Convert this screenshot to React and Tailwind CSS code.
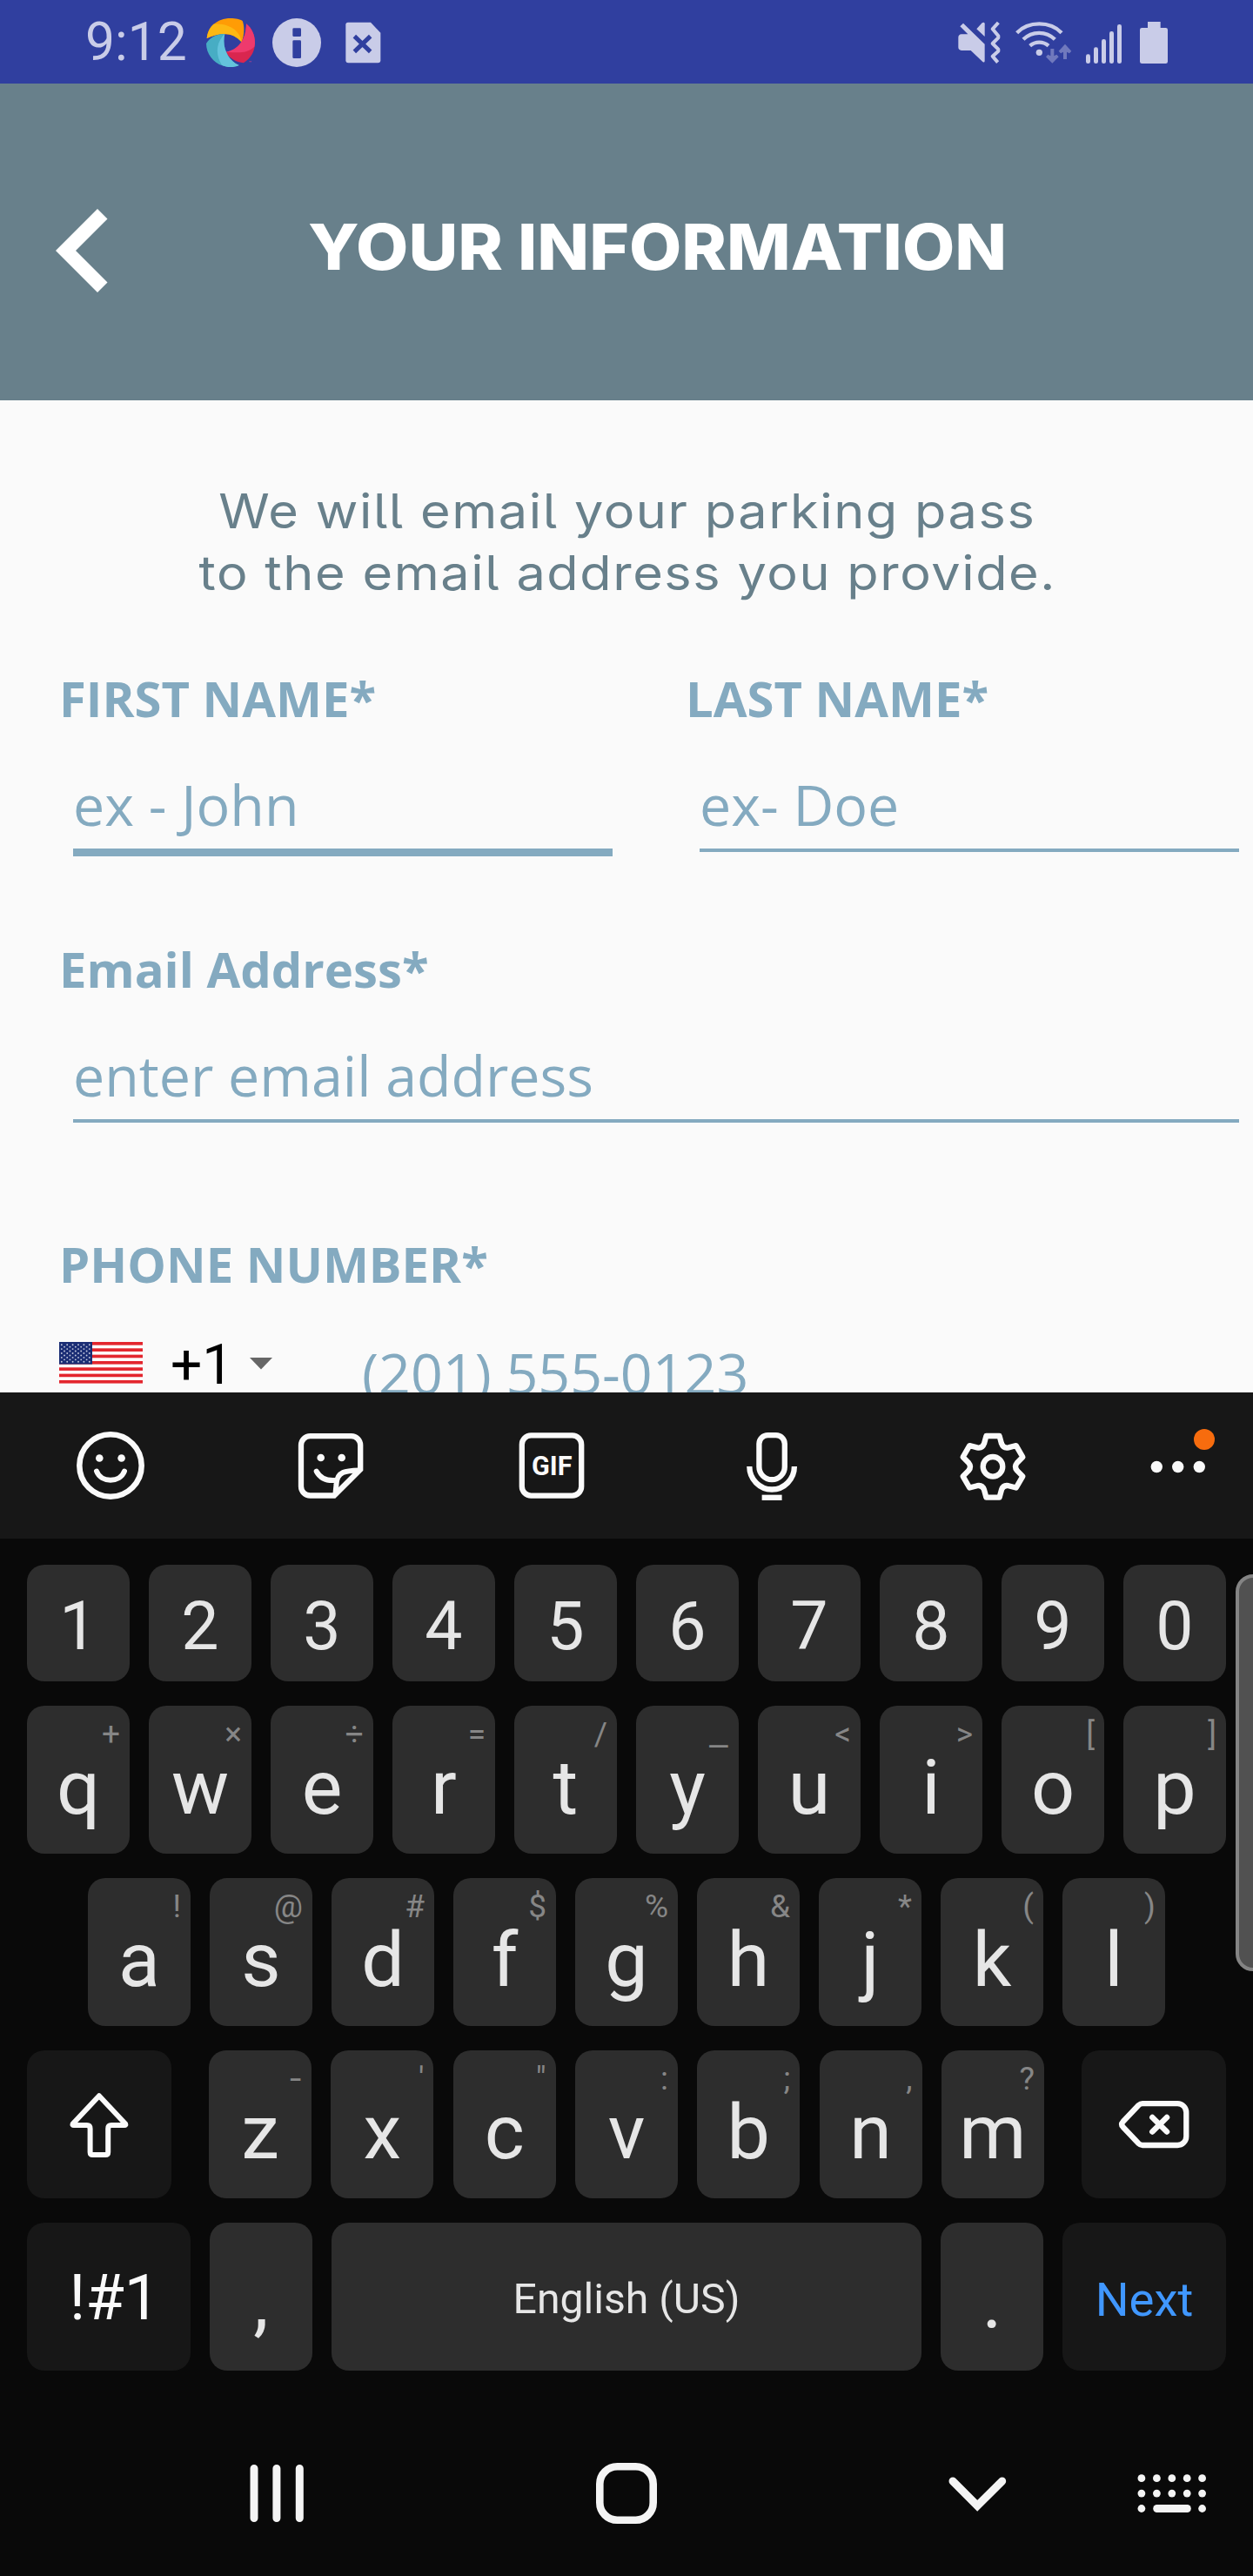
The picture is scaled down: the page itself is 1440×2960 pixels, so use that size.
import React from "react";

const GEAR_PATH = (() => {
  const cx = 1141;
  const cy = 1685.3;
  const rot = (x, y, deg) => {
    const a = (deg * Math.PI) / 180;
    const px = cx + x * Math.cos(a) - y * Math.sin(a);
    const py = cy + x * Math.sin(a) + y * Math.cos(a);
    return `${px.toFixed(2)} ${py.toFixed(2)}`;
  };
  let d = "";
  for (let i = 0; i < 6; i++) {
    const r = i * 60;
    d += `${i === 0 ? "M" : "L"}${rot(-10, -26.5, r)} L${rot(-7.6, -35.3, r)} L${rot(7.6, -35.3, r)} L${rot(10, -26.5, r)} Q${rot(12, -20.8, r)} ${rot(-10, -26.5, r + 60)} `;
  }
  return d + "Z";
})();

function StatusBar() {
  return (
    <div className="flex h-[96px] items-center justify-between bg-[#303f9f] pr-[96px] pl-[98px] text-[#c9cce8]">
      <div className="flex items-center">
        <span className="w-[137px] pt-[2px] text-[60.5px] leading-[94px] whitespace-nowrap">9:12</span>
        <svg width="60" height="96" viewBox="525 0 180 288">
          <path d="M533 132C535 92 570 63 615 63C632 63 648 66 656 72C664 92 662 125 653 145C625 113 585 108 533 132Z" fill="#ff9c05" />
          <path d="M533 132C536 110 544 94 556 83C600 78 648 100 653 145C625 113 585 108 533 132Z" fill="#fdb813" />
          <path d="M669 82C690 98 699 124 699 147C699 176 686 200 660 217C634 214 612 202 598 180C640 172 668 140 669 82Z" fill="#d9264f" />
          <path d="M669 82C690 98 699 124 699 147C699 151 698 157 697 161C664 190 632 178 598 180C640 172 668 140 669 82Z" fill="#ee3a6d" />
          <path d="M531 150C546 127 570 117 595 117C584 160 604 208 644 225C634 230 625 231 615 231C568 231 531 194 531 150Z" fill="#47adc4" />
          <path d="M595 117C584 160 604 208 644 225C634 230 625 231 615 231C604 231 594 228 585 224C562 190 564 146 595 117Z" fill="#64c3dc" />
          <text x="677" y="222" fontSize="17" fill="#b8407f">™</text>
        </svg>
        <svg className="ml-[15px]" width="63" height="96" viewBox="750 0 189 288">
          <circle cx="843" cy="147" r="84" fill="currentColor" />
          <rect x="829" y="97" width="29" height="29" rx="4" fill="#303f9f" />
          <rect x="829" y="139" width="29" height="62" rx="4" fill="#303f9f" />
        </svg>
        <svg className="ml-[20px]" width="50" height="96" viewBox="998 0 150 288">
          <path d="M1019 77H1097L1131 113V208Q1131 217 1122 217H1020Q1011 217 1011 208V85Q1011 77 1019 77Z" fill="currentColor" />
          <path d="M1041 125L1096 178M1096 125L1041 178" stroke="#303f9f" strokeWidth="15" />
        </svg>
      </div>
      <div className="flex items-center">
        <svg width="50" height="96" viewBox="120 0 150 288">
          <path d="M141 80L215 152V211Q214 217 208 213L167 174H135Q124 173 124 163V130Q124 119 135 118H157L130 91Z" fill="currentColor" />
          <path d="M187 100L206 79Q214 75 215 82V126Z" fill="currentColor" />
          <path d="M262 78L242 100L262 124L262 130L242 150L262 170V176L242 194L260 215" fill="none" stroke="currentColor" strokeWidth="12" strokeLinejoin="round" />
        </svg>
        <svg className="ml-[15px]" width="68" height="96" viewBox="315 0 204 288">
          <g fill="none" stroke="currentColor" strokeWidth="13">
            <path d="M326 113C366 72 440 72 480 113" />
            <path d="M348 136C378 106 427 106 457 136" />
            <path d="M371 158C389 142 417 142 435 158" />
          </g>
          <circle cx="403" cy="181" r="11" fill="currentColor" />
          <path d="M442 168H454V193L463 188L470 196L448 218L426 196L433 188L442 193ZM486 204H498V179L507 184L514 176L492 152L470 176L477 184L486 179Z" fill="#7079bd" />
        </svg>
        <svg className="ml-[12px]" width="45" height="96" viewBox="555 0 135 288">
          <g fill="currentColor">
            <rect x="564" y="187" width="15" height="32" rx="7" />
            <rect x="591" y="163" width="15" height="56" rx="7" />
            <rect x="618" y="135" width="15" height="84" rx="7" />
            <rect x="645" y="108" width="15" height="111" rx="7" />
            <rect x="672" y="84" width="15" height="135" rx="7" />
          </g>
        </svg>
        <svg className="ml-[18px]" width="36" height="96" viewBox="744 0 108 288">
          <path d="M777 75H821V96H839Q846 96 846 103V212Q846 219 839 219H757Q750 219 750 212V103Q750 96 757 96H777Z" fill="currentColor" />
        </svg>
      </div>
    </div>
  );
}

function Header() {
  return (
    <header className="flex h-[364px] items-start bg-[#68808b] text-white">
      <svg className="mt-[136px] ml-[58px] shrink-0" width="70" height="112" viewBox="58 232 70 112">
        <path d="M64 288L112 240L123.500 251.500L87 288L123.500 324.500L112 336Z" fill="currentColor" />
      </svg>
      <h1 className="mt-[148px] ml-[226px] origin-left scale-x-[1.07] font-['Inter'] text-[73px] leading-[80px] font-extrabold whitespace-nowrap">
        YOUR INFORMATION
      </h1>
    </header>
  );
}

function Field({ label, placeholder, focused }) {
  return (
    <div className="flex-1">
      <div className="pl-[68px] text-[56.2px] leading-[56px] font-bold">{label}</div>
      <div className="mt-[64px] mr-[16px] ml-[84px] h-[81px] text-[64.5px] leading-[60px] whitespace-nowrap">
        {placeholder}
      </div>
      <div className={focused ? "mr-[16px] ml-[84px] h-[9px] bg-[#84aac0]" : "mr-[16px] ml-[84px] h-[4px] bg-[#84aac0]"} />
    </div>
  );
}

function Flag() {
  const stars = [];
  for (let r = 0; r < 9; r++) {
    const n = r % 2 === 0 ? 6 : 5;
    for (let c = 0; c < n; c++) {
      stars.push(<circle key={`${r}-${c}`} cx={2.8 + c * 6.4 + (r % 2) * 3.2} cy={3.2 + r * 2.45} r="0.95" fill="#c3c9de" />);
    }
  }
  return (
    <svg className="mt-[14px] ml-[68px] shrink-0" width="96" height="48" viewBox="0 0 96 48">
      <rect width="96" height="47.6" fill="#fff" />
      {[0, 1, 2, 3, 4, 5, 6].map((i) => (
        <rect key={i} y={i * 7.32} width="96" height="3.66" fill="#e3262e" />
      ))}
      <rect width="38" height="25.600" fill="#1a2d74" />
      {stars}
    </svg>
  );
}

function Form() {
  return (
    <main className="h-[1140px] overflow-hidden bg-[#fafafa] pt-[92px] font-['Open_Sans'] text-[#84aac0]">
      <p className="flex h-[142px] flex-col items-center pl-[2px] font-['Inter'] text-[55px] leading-[71px] tracking-[1.45px] text-[#68808b] [font-feature-settings:'cv05']">
        <span className="scale-x-[1.08] whitespace-nowrap">We will email your parking pass</span>
        <span className="scale-x-[1.08] whitespace-nowrap">to the email address you provide.</span>
      </p>
      <div className="mt-[80px] flex h-[311px]">
        <Field label="FIRST NAME*" placeholder="ex - John" focused />
        <Field label="LAST NAME*" placeholder="ex- Doe" />
      </div>
      <div className="flex h-[339px]">
        <Field label="Email Address*" placeholder="enter email address" />
      </div>
      <div className="pl-[68px] text-[56.2px] leading-[56px] font-bold">PHONE NUMBER*</div>
      <div className="mt-[48px] flex items-start">
        <Flag />
        <span className="mt-[11px] ml-[32px] w-[91px] font-['Roboto'] text-[64px] leading-[60px] text-black">+1</span>
        <svg className="mt-[32px] shrink-0" width="26" height="14" viewBox="0 0 26 14">
          <path d="M0 0H26L13 13.500Z" fill="#666" />
        </svg>
        <span className="mt-[19px] ml-[103px] text-[64.5px] leading-[60px] whitespace-nowrap">(201) 555-0123</span>
      </div>
    </main>
  );
}

function Toolbar() {
  return (
    <div className="flex h-[168px] bg-[#171717] pl-[87px] text-[#fafafa]">
      <svg width="80" height="168" viewBox="87 1600 80 168" fill="none" stroke="currentColor" strokeWidth="6.500">
        <circle cx="127" cy="1684" r="35.700" />
        <circle cx="114.300" cy="1675.500" r="4.300" fill="currentColor" stroke="none" />
        <circle cx="139.600" cy="1675.500" r="4.300" fill="currentColor" stroke="none" />
        <path d="M111 1690.500C116 1704 138 1704 143 1690.500" strokeWidth="6" strokeLinecap="round" />
      </svg>
      <svg className="ml-[173px]" width="80" height="168" viewBox="340 1600 80 168" fill="none" stroke="currentColor" strokeWidth="6.300">
        <path d="M384 1718.500H356.500A10.500 10.500 0 0 1 346 1708V1660.600A10.500 10.500 0 0 1 356.500 1650.100H403.700A10.500 10.500 0 0 1 414.200 1660.600V1688.500Z" />
        <path d="M414 1689.500C398 1690 387 1690 386.500 1706L385.300 1718" strokeWidth="6" />
        <circle cx="368.700" cy="1675" r="4.300" fill="currentColor" stroke="none" />
        <circle cx="392.700" cy="1675" r="4.300" fill="currentColor" stroke="none" />
        <path d="M363.700 1690.700C368 1698.500 375 1701.500 384 1701" strokeWidth="6" strokeLinecap="round" />
      </svg>
      <svg className="ml-[174px]" width="80" height="168" viewBox="594 1600 80 168">
        <rect x="599.800" y="1649.400" width="68.400" height="69.200" rx="10.500" fill="none" stroke="currentColor" strokeWidth="6.300" />
        <text x="634.200" y="1695" textAnchor="middle" fontSize="30.500" fontWeight="700" fill="currentColor">GIF</text>
      </svg>
      <svg className="ml-[173px]" width="80" height="168" viewBox="847 1600 80 168" fill="none" stroke="currentColor" strokeWidth="6.300">
        <path d="M872.400 1659A10 10 0 0 1 882.400 1649.200H891.800A10 10 0 0 1 901.800 1659V1685.500A14.700 14.700 0 0 1 872.400 1685.500Z" />
        <path d="M861.300 1685A25.800 26.500 0 0 0 912.900 1685" />
        <path d="M875.600 1720.800H898.600" />
      </svg>
      <svg className="ml-[174px]" width="80" height="168" viewBox="1101 1600 80 168" fill="none" stroke="currentColor" strokeWidth="6.300" strokeLinejoin="round">
        <path d={GEAR_PATH} />
        <circle cx="1141" cy="1685.300" r="11.300" />
      </svg>
      <svg className="ml-[137px]" width="82" height="168" viewBox="1318 1600 82 168">
        <circle cx="1329.300" cy="1685.500" r="6.700" fill="currentColor" />
        <circle cx="1353.700" cy="1685.500" r="6.700" fill="currentColor" />
        <circle cx="1378.300" cy="1685.500" r="6.700" fill="currentColor" />
        <circle cx="1384" cy="1654" r="12" fill="#f76c0e" />
      </svg>
    </div>
  );
}

function Key({ char, hint }) {
  const wide = hint === "-" || hint === "_";
  return (
    <div className="relative h-[170px] w-[118px] rounded-[20px] bg-[#2d2d2d] pt-[9px] text-center text-[88px] leading-[170px] text-[#e6e6e6]">
      {char}
      {hint && (
        <span
          className={
            wide
              ? "absolute top-[11px] right-[12px] origin-right scale-x-[1.3] text-[37px] leading-[44px] text-[#868686]"
              : "absolute top-[11px] right-[11px] text-[37px] leading-[44px] text-[#868686]"
          }
        >
          {hint}
        </span>
      )}
    </div>
  );
}

function KeyRow({ chars, hints, className }) {
  return (
    <div className={className}>
      {chars.map((c, i) => (
        <Key key={c} char={c} hint={hints[i]} />
      ))}
    </div>
  );
}

function Keyboard() {
  return (
    <section className="relative h-[956px] overflow-hidden bg-[#090909] px-[31px] pt-[30px]">
      <div className="flex gap-[22px]">
        {"1234567890".split("").map((n) => (
          <div key={n} className="h-[134px] w-[118px] rounded-[20px] bg-[#2d2d2d] pt-[4px] text-center text-[77px] leading-[134px] text-[#e6e6e6]">
            {n}
          </div>
        ))}
      </div>
      <KeyRow className="mt-[28px] flex gap-[22px]" chars={"qwertyuiop".split("")} hints={["+", "×", "÷", "=", "/", "_", "<", ">", "[", "]"]} />
      <KeyRow className="mt-[28px] flex justify-center gap-[22px]" chars={"asdfghjkl".split("")} hints={["!", "@", "#", "$", "%", "&", "*", "(", ")"]} />
      <div className="mt-[28px] flex justify-between">
        <div className="h-[170px] w-[166px] rounded-[20px] bg-[#171717] pl-[43px] text-[#fafafa]">
          <svg width="80" height="170" viewBox="74 2356 80 170">
            <path d="M113.900 2408.200L144.200 2440.500Q144.800 2442 143 2442H128Q124.200 2442 124.200 2446V2473Q124.200 2476 121.200 2476H106.600Q103.600 2476 103.600 2473V2446Q103.600 2442 99.800 2442H84.800Q83 2442 83.600 2440.500Z" fill="none" stroke="currentColor" strokeWidth="6" strokeLinejoin="round" />
          </svg>
        </div>
        <KeyRow className="flex gap-[22.300px]" chars={"zxcvbnm".split("")} hints={["-", "'", "\"", ":", ";", ",", "?"]} />
        <div className="h-[170px] w-[166px] rounded-[20px] bg-[#171717] pl-[38px] text-[#fafafa]">
          <svg width="90" height="170" viewBox="1281 2356 90 170" fill="none" stroke="currentColor" strokeLinejoin="round" strokeLinecap="round">
            <path d="M1313 2417.200H1353.300A10 10 0 0 1 1363.300 2427.200V2455A10 10 0 0 1 1353.300 2465H1313Q1310.500 2465 1308.500 2463L1290.500 2444Q1287.800 2441 1290.500 2438L1308.500 2419Q1310.500 2417.200 1313 2417.200Z" strokeWidth="6.300" />
            <path d="M1324.300 2433L1341 2449.500M1341 2433L1324.300 2449.500" strokeWidth="6.500" />
          </svg>
        </div>
      </div>
      <div className="mt-[28px] flex gap-[22px]">
        <div className="h-[170px] w-[188px] rounded-[20px] bg-[#171717] pt-[2px] pl-[13px] text-center text-[72.5px] leading-[170px] text-[#fafafa]">!#1</div>
        <div className="h-[170px] w-[118px] rounded-[20px] bg-[#2d2d2d] pt-[5px] text-center text-[88px] leading-[170px] text-[#e6e6e6]">,</div>
        <div className="h-[170px] w-[678px] rounded-[20px] bg-[#2d2d2d] pt-[3px] text-center text-[48.2px] leading-[170px] text-[#e6e6e6]">English (US)</div>
        <div className="h-[170px] w-[118px] rounded-[20px] bg-[#2d2d2d] pt-[5px] text-center text-[88px] leading-[170px] text-[#e6e6e6]">.</div>
        <div className="h-[170px] w-[188px] rounded-[20px] bg-[#171717] pt-[3px] text-center text-[54.5px] leading-[170px] text-[#4097ff]">Next</div>
      </div>
      <div className="absolute top-[41px] -right-[24px] h-[456px] w-[44px] rounded-[20px] border-4 border-[#848484] bg-[#515151]" />
    </section>
  );
}

function NavBar() {
  return (
    <nav className="flex h-[236px] bg-[#090909] pt-[96px] pl-[285px] text-[#f4f4f4]">
      <svg width="66" height="92" viewBox="285 2820 66 92" stroke="currentColor" strokeWidth="9" strokeLinecap="round">
        <path d="M292 2836.500V2893.500M317.900 2836.500V2893.500M344.300 2836.500V2893.500" />
      </svg>
      <svg className="ml-[329px]" width="80" height="92" viewBox="680 2820 80 92">
        <rect x="689.300" y="2834.300" width="61.400" height="61.400" rx="20" fill="none" stroke="currentColor" strokeWidth="8.600" />
      </svg>
      <svg className="ml-[325px]" width="77" height="92" viewBox="1085 2820 77 92">
        <path d="M1095 2851L1123.200 2879.300L1151.700 2851" fill="none" stroke="currentColor" strokeWidth="9" strokeLinecap="round" />
      </svg>
      <svg className="ml-[138px]" width="94" height="92" viewBox="1300 2820 94 92" fill="currentColor">
        {[2847.700, 2865.100].map((y) =>
          [1311.900, 1329.400, 1346.800, 1364.200, 1381.600].map((x) => <circle key={`${x}-${y}`} cx={x} cy={y} r="4.400" />)
        )}
        <circle cx="1311.900" cy="2882.500" r="4.400" />
        <circle cx="1381.600" cy="2882.500" r="4.400" />
        <rect x="1325.200" y="2878" width="43.600" height="9" rx="4.400" />
      </svg>
    </nav>
  );
}

export default function App() {
  return (
    <div className="w-[1440px] overflow-hidden font-['Roboto']">
      <StatusBar />
      <Header />
      <Form />
      <Toolbar />
      <Keyboard />
      <NavBar />
    </div>
  );
}
